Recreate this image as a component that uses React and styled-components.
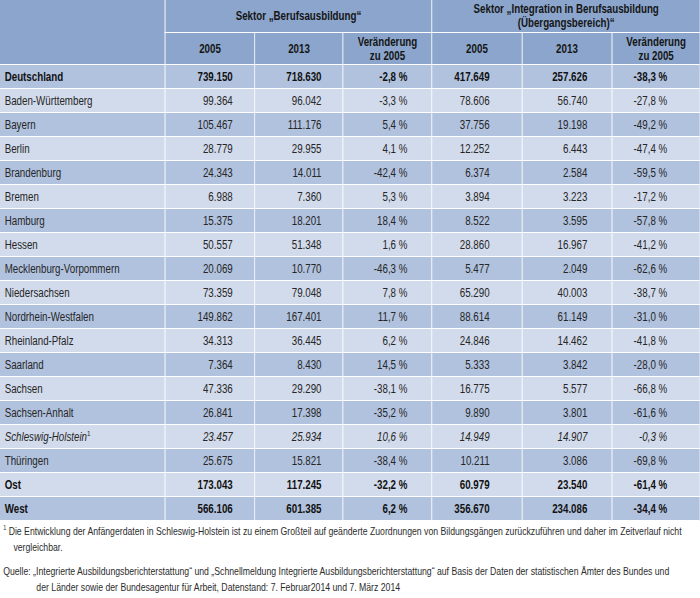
import React from 'react';
import styled, { createGlobalStyle } from 'styled-components';

// the source uses a condensed face; we squeeze Liberation Sans horizontally
const K = 0.78;
const NK = 0.79;

const GlobalStyle = createGlobalStyle`
  html, body {
    margin: 0;
    padding: 0;
    background: #ffffff;
    overflow: hidden;
  }
  body {
    font-family: "Liberation Sans", Arial, sans-serif;
    color: #1e1e1e;
  }
`;

const Page = styled.div`
  width: 700px;
  overflow: hidden;
`;

const Squeeze = styled.div`
  width: ${p => 700 / p.k}px;
  transform: scaleX(${p => p.k});
  transform-origin: 0 0;
`;

const Table = styled.table`
  width: 100%;
  border-collapse: collapse;
  table-layout: fixed;
  font-size: 12.5px;

  th, td {
    border-style: solid;
    border-color: #ffffff;
    border-width: 1px 1.4px;
    padding: 0;
  }
  tr > *:first-child {
    border-left: none;
  }
  tr > *:last-child {
    border-right: none;
  }
  thead tr:first-child th {
    border-top: none;
  }
`;

const HeadCell = styled.th`
  background: #8ba5cc;
  font-weight: bold;
  font-size: 12.5px;
  text-align: center;
  line-height: 14px;
  height: ${p => p.h || 32}px;
  color: #151515;
`;

const Row = styled.tr`
  background: ${p => (p.dark ? '#b1c2de' : '#d2dbeb')};
  height: 24px;
  font-weight: ${p => (p.bold ? 'bold' : 'normal')};
  font-style: ${p => (p.italic ? 'italic' : 'normal')};
  color: ${p => (p.bold ? '#111' : '#262626')};
`;

const LabelCell = styled.td`
  text-align: left;
  padding-left: 6px !important;
  white-space: nowrap;
`;

const NumCell = styled.td`
  text-align: right;
  padding-right: ${p => p.pr}px !important;
  white-space: nowrap;
`;

const Sup = styled.sup`
  font-size: ${p => p.size || 8}px;
  vertical-align: 5px;
  line-height: 0;
  font-style: normal;
`;

const Notes = styled.div`
  font-size: 11px;
  line-height: 16px;
  color: #2c2c2c;
  padding: 2px 0 0 4px;
`;

const Note = styled.p`
  margin: 0 0 8px 0;
  white-space: nowrap;
  padding-left: ${p => p.indent}px;
  text-indent: -${p => p.indent}px;
`;

const cols = [165, 90, 88, 89, 90, 90, 88].map(w => w / K);
const pads = [22, 21, 24, 32, 24, 33].map(p => Math.round(p / K));

const rows = [
  ['Deutschland', '739.150', '718.630', '-2,8 %', '417.649', '257.626', '-38,3 %', { bold: true }],
  ['Baden-Württemberg', '99.364', '96.042', '-3,3 %', '78.606', '56.740', '-27,8 %'],
  ['Bayern', '105.467', '111.176', '5,4 %', '37.756', '19.198', '-49,2 %'],
  ['Berlin', '28.779', '29.955', '4,1 %', '12.252', '6.443', '-47,4 %'],
  ['Brandenburg', '24.343', '14.011', '-42,4 %', '6.374', '2.584', '-59,5 %'],
  ['Bremen', '6.988', '7.360', '5,3 %', '3.894', '3.223', '-17,2 %'],
  ['Hamburg', '15.375', '18.201', '18,4 %', '8.522', '3.595', '-57,8 %'],
  ['Hessen', '50.557', '51.348', '1,6 %', '28.860', '16.967', '-41,2 %'],
  ['Mecklenburg-Vorpommern', '20.069', '10.770', '-46,3 %', '5.477', '2.049', '-62,6 %'],
  ['Niedersachsen', '73.359', '79.048', '7,8 %', '65.290', '40.003', '-38,7 %'],
  ['Nordrhein-Westfalen', '149.862', '167.401', '11,7 %', '88.614', '61.149', '-31,0 %'],
  ['Rheinland-Pfalz', '34.313', '36.445', '6,2 %', '24.846', '14.462', '-41,8 %'],
  ['Saarland', '7.364', '8.430', '14,5 %', '5.333', '3.842', '-28,0 %'],
  ['Sachsen', '47.336', '29.290', '-38,1 %', '16.775', '5.577', '-66,8 %'],
  ['Sachsen-Anhalt', '26.841', '17.398', '-35,2 %', '9.890', '3.801', '-61,6 %'],
  ['Schleswig-Holstein', '23.457', '25.934', '10,6 %', '14.949', '14.907', '-0,3 %', { italic: true, sup: true }],
  ['Thüringen', '25.675', '15.821', '-38,4 %', '10.211', '3.086', '-69,8 %'],
  ['Ost', '173.043', '117.245', '-32,2 %', '60.979', '23.540', '-61,4 %', { bold: true }],
  ['West', '566.106', '601.385', '6,2 %', '356.670', '234.086', '-34,4 %', { bold: true }],
];

export default function App() {
  return (
    <Page>
      <GlobalStyle />
      <Squeeze k={K}>
        <Table>
          <colgroup>
            {cols.map((w, i) => (
              <col key={i} style={{ width: w }} />
            ))}
          </colgroup>
          <thead>
            <tr>
              <HeadCell rowSpan={2} />
              <HeadCell colSpan={3} h={32}>Sektor „Berufsausbildung“</HeadCell>
              <HeadCell colSpan={3} h={32}>
                Sektor „Integration in Berufsausbildung
                <br />
                (Übergangsbereich)“
              </HeadCell>
            </tr>
            <tr>
              <HeadCell h={31}>2005</HeadCell>
              <HeadCell h={31}>2013</HeadCell>
              <HeadCell h={31}>Veränderung<br />zu 2005</HeadCell>
              <HeadCell h={31}>2005</HeadCell>
              <HeadCell h={31}>2013</HeadCell>
              <HeadCell h={31}>Veränderung<br />zu 2005</HeadCell>
            </tr>
          </thead>
          <tbody>
            {rows.map((r, i) => {
              const opts = r[7] || {};
              return (
                <Row key={r[0]} dark={i % 2 === 0} bold={opts.bold} italic={opts.italic}>
                  <LabelCell>
                    {r[0]}
                    {opts.sup && <Sup>1</Sup>}
                  </LabelCell>
                  {r.slice(1, 7).map((v, j) => (
                    <NumCell key={j} pr={pads[j]}>{v}</NumCell>
                  ))}
                </Row>
              );
            })}
          </tbody>
        </Table>
      </Squeeze>
      <Squeeze k={NK}>
        <Notes>
          <Note indent={13}>
            <Sup size={7}>1</Sup> Die Entwicklung der Anfängerdaten in Schleswig-Holstein ist zu einem Großteil auf geänderte Zuordnungen von Bildungsgängen zurückzuführen und daher im Zeitverlauf nicht
            <br />
            vergleichbar.
          </Note>
          <Note indent={42}>
            Quelle: „Integrierte Ausbildungsberichterstattung“ und „Schnellmeldung Integrierte Ausbildungsberichterstattung“ auf Basis der Daten der statistischen Ämter des Bundes und
            <br />
            der Länder sowie der Bundesagentur für Arbeit, Datenstand: 7. Februar2014 und 7. März 2014
          </Note>
        </Notes>
      </Squeeze>
    </Page>
  );
}
